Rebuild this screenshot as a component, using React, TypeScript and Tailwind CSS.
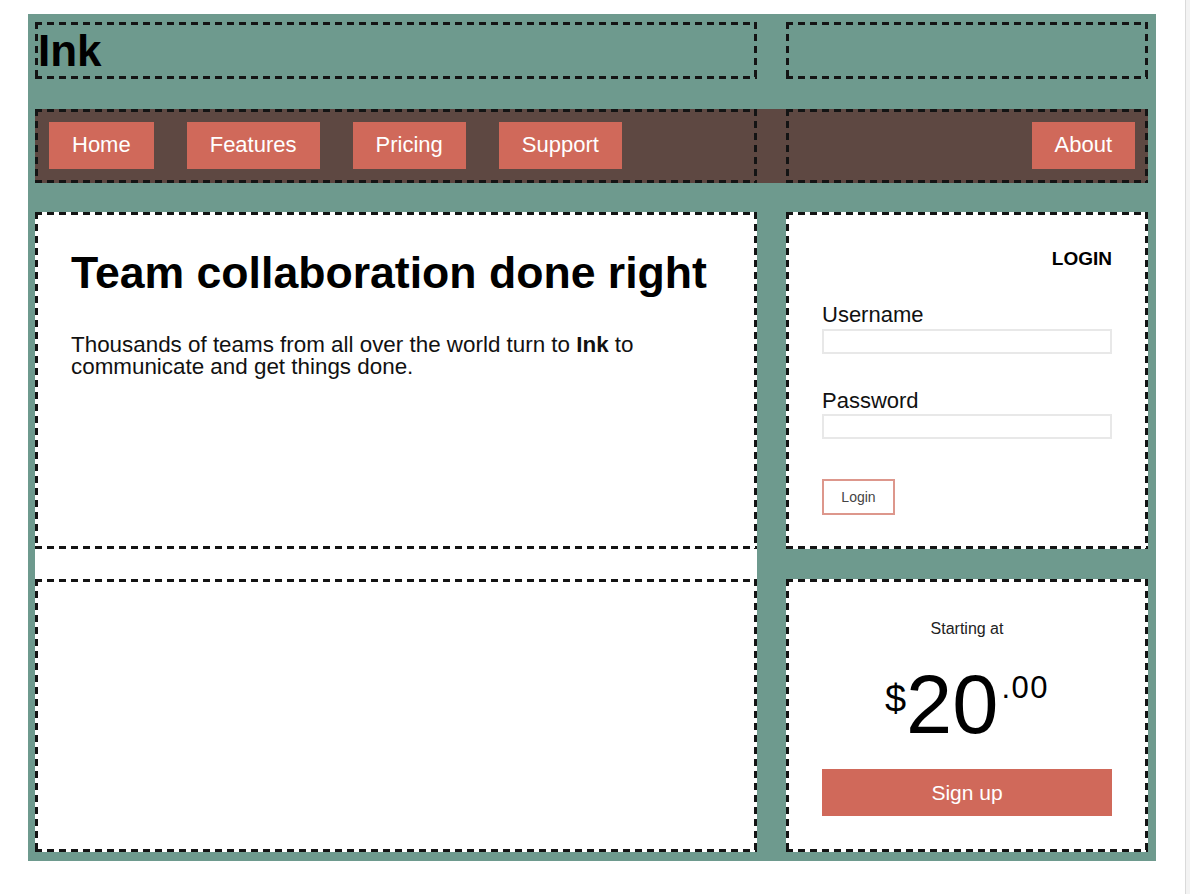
export default function App() {
  const dashed =
    "border-[3px] border-transparent bg-no-repeat [background-origin:border-box] [background-clip:border-box] [background-image:repeating-linear-gradient(90deg,#141414_0_7px,transparent_7px_12px),repeating-linear-gradient(90deg,#141414_0_7px,transparent_7px_12px),repeating-linear-gradient(180deg,#141414_0_7px,transparent_7px_12px),repeating-linear-gradient(180deg,#141414_0_7px,transparent_7px_12px)] [background-size:100%_3px,100%_3px,3px_100%,3px_100%] [background-position:0_0,0_100%,0_0,100%_0]";
  const navBtn =
    "h-[47px] px-[23px] flex items-center bg-[#d0695a] text-white text-[22px] leading-none";
  return (
    <div className="flex min-h-[894px] bg-white font-['Liberation_Sans',Arial,Helvetica,sans-serif] text-black">
      <div className="w-[1185px] pt-[14px] pl-[28px]">
        <div className="w-[1128px] bg-[#6e9a8e] pt-[8px] pb-[9px] pl-[7px] pr-[8px]">
          {/* Header row */}
          <header className="grid grid-cols-[722px_362px] gap-x-[29px]">
            <div className={`h-[57px] ${dashed} flex items-center`}>
              <h1 className="text-[44px] leading-none font-bold">Ink</h1>
            </div>
            <div className={`h-[57px] ${dashed}`} />
          </header>

          {/* Nav row */}
          <nav className="mt-[30px] bg-[#5e4842] grid grid-cols-[722px_362px] gap-x-[29px]">
            <div className={`h-[74px] ${dashed} flex items-center gap-[33px] pl-[11px] pb-[2px]`}>
              <a className={navBtn}>Home</a>
              <a className={navBtn}>Features</a>
              <a className={navBtn}>Pricing</a>
              <a className={navBtn}>Support</a>
            </div>
            <div className={`h-[74px] ${dashed} flex items-center justify-end pr-[10px] pb-[2px]`}>
              <a className={navBtn}>About</a>
            </div>
          </nav>

          {/* Body */}
          <div className="mt-[29px] grid grid-cols-[722px_362px] gap-x-[29px]">
            <div className="bg-white flex flex-col gap-[30px]">
              <section className={`h-[337px] ${dashed} bg-white px-[33px] pt-[33px]`}>
                <h2 className="text-[44.6px] leading-[50px] font-bold">
                  Team collaboration done right
                </h2>
                <p className="mt-[36px] text-[22.4px] leading-[22px] text-[#111]">
                  Thousands of teams from all over the world turn to <strong>Ink</strong> to
                  communicate and get things done.
                </p>
              </section>
              <section className={`h-[273px] ${dashed} bg-white`} />
            </div>

            <div className="flex flex-col gap-[30px]">
              <section className={`h-[337px] ${dashed} bg-white px-[33px] pt-[33px] flex flex-col`}>
                <div className="text-right text-[19px] leading-[22px] font-bold">LOGIN</div>
                <label className="mt-[33px] text-[22px] leading-[24px] text-[#111]">Username</label>
                <div className="mt-[2px] h-[25px] w-full border-2 border-[#e8e8e8] bg-white" />
                <label className="mt-[35px] text-[22px] leading-[24px] text-[#111]">Password</label>
                <div className="mt-[1px] h-[25px] w-full border-2 border-[#e8e8e8] bg-white" />
                <button className="mt-[40px] h-[36px] w-[73px] border-2 border-[#dd978c] bg-white text-[14px] text-[#444] flex items-center justify-center">
                  Login
                </button>
              </section>

              <section className={`h-[273px] ${dashed} bg-white px-[33px] pt-[38px] flex flex-col`}>
                <div className="text-center text-[16px] leading-[18px] text-[#222]">Starting at</div>
                <div className="mt-[25px] flex justify-center items-start">
                  <span className="mt-[17px] text-[38px] leading-none">$</span>
                  <span className="text-[83px] leading-none">20</span>
                  <span className="mt-[9px] ml-[3px] text-[31px] leading-none tracking-[1.5px]">.00</span>
                </div>
                <button className="mt-[23px] h-[47px] w-full bg-[#d0695a] text-white text-[21px] flex items-center justify-center">
                  Sign up
                </button>
              </section>
            </div>
          </div>
        </div>
      </div>
      <div className="w-[5px] border-l border-[#dadada] bg-[#f3f3f3]" />
    </div>
  );
}
